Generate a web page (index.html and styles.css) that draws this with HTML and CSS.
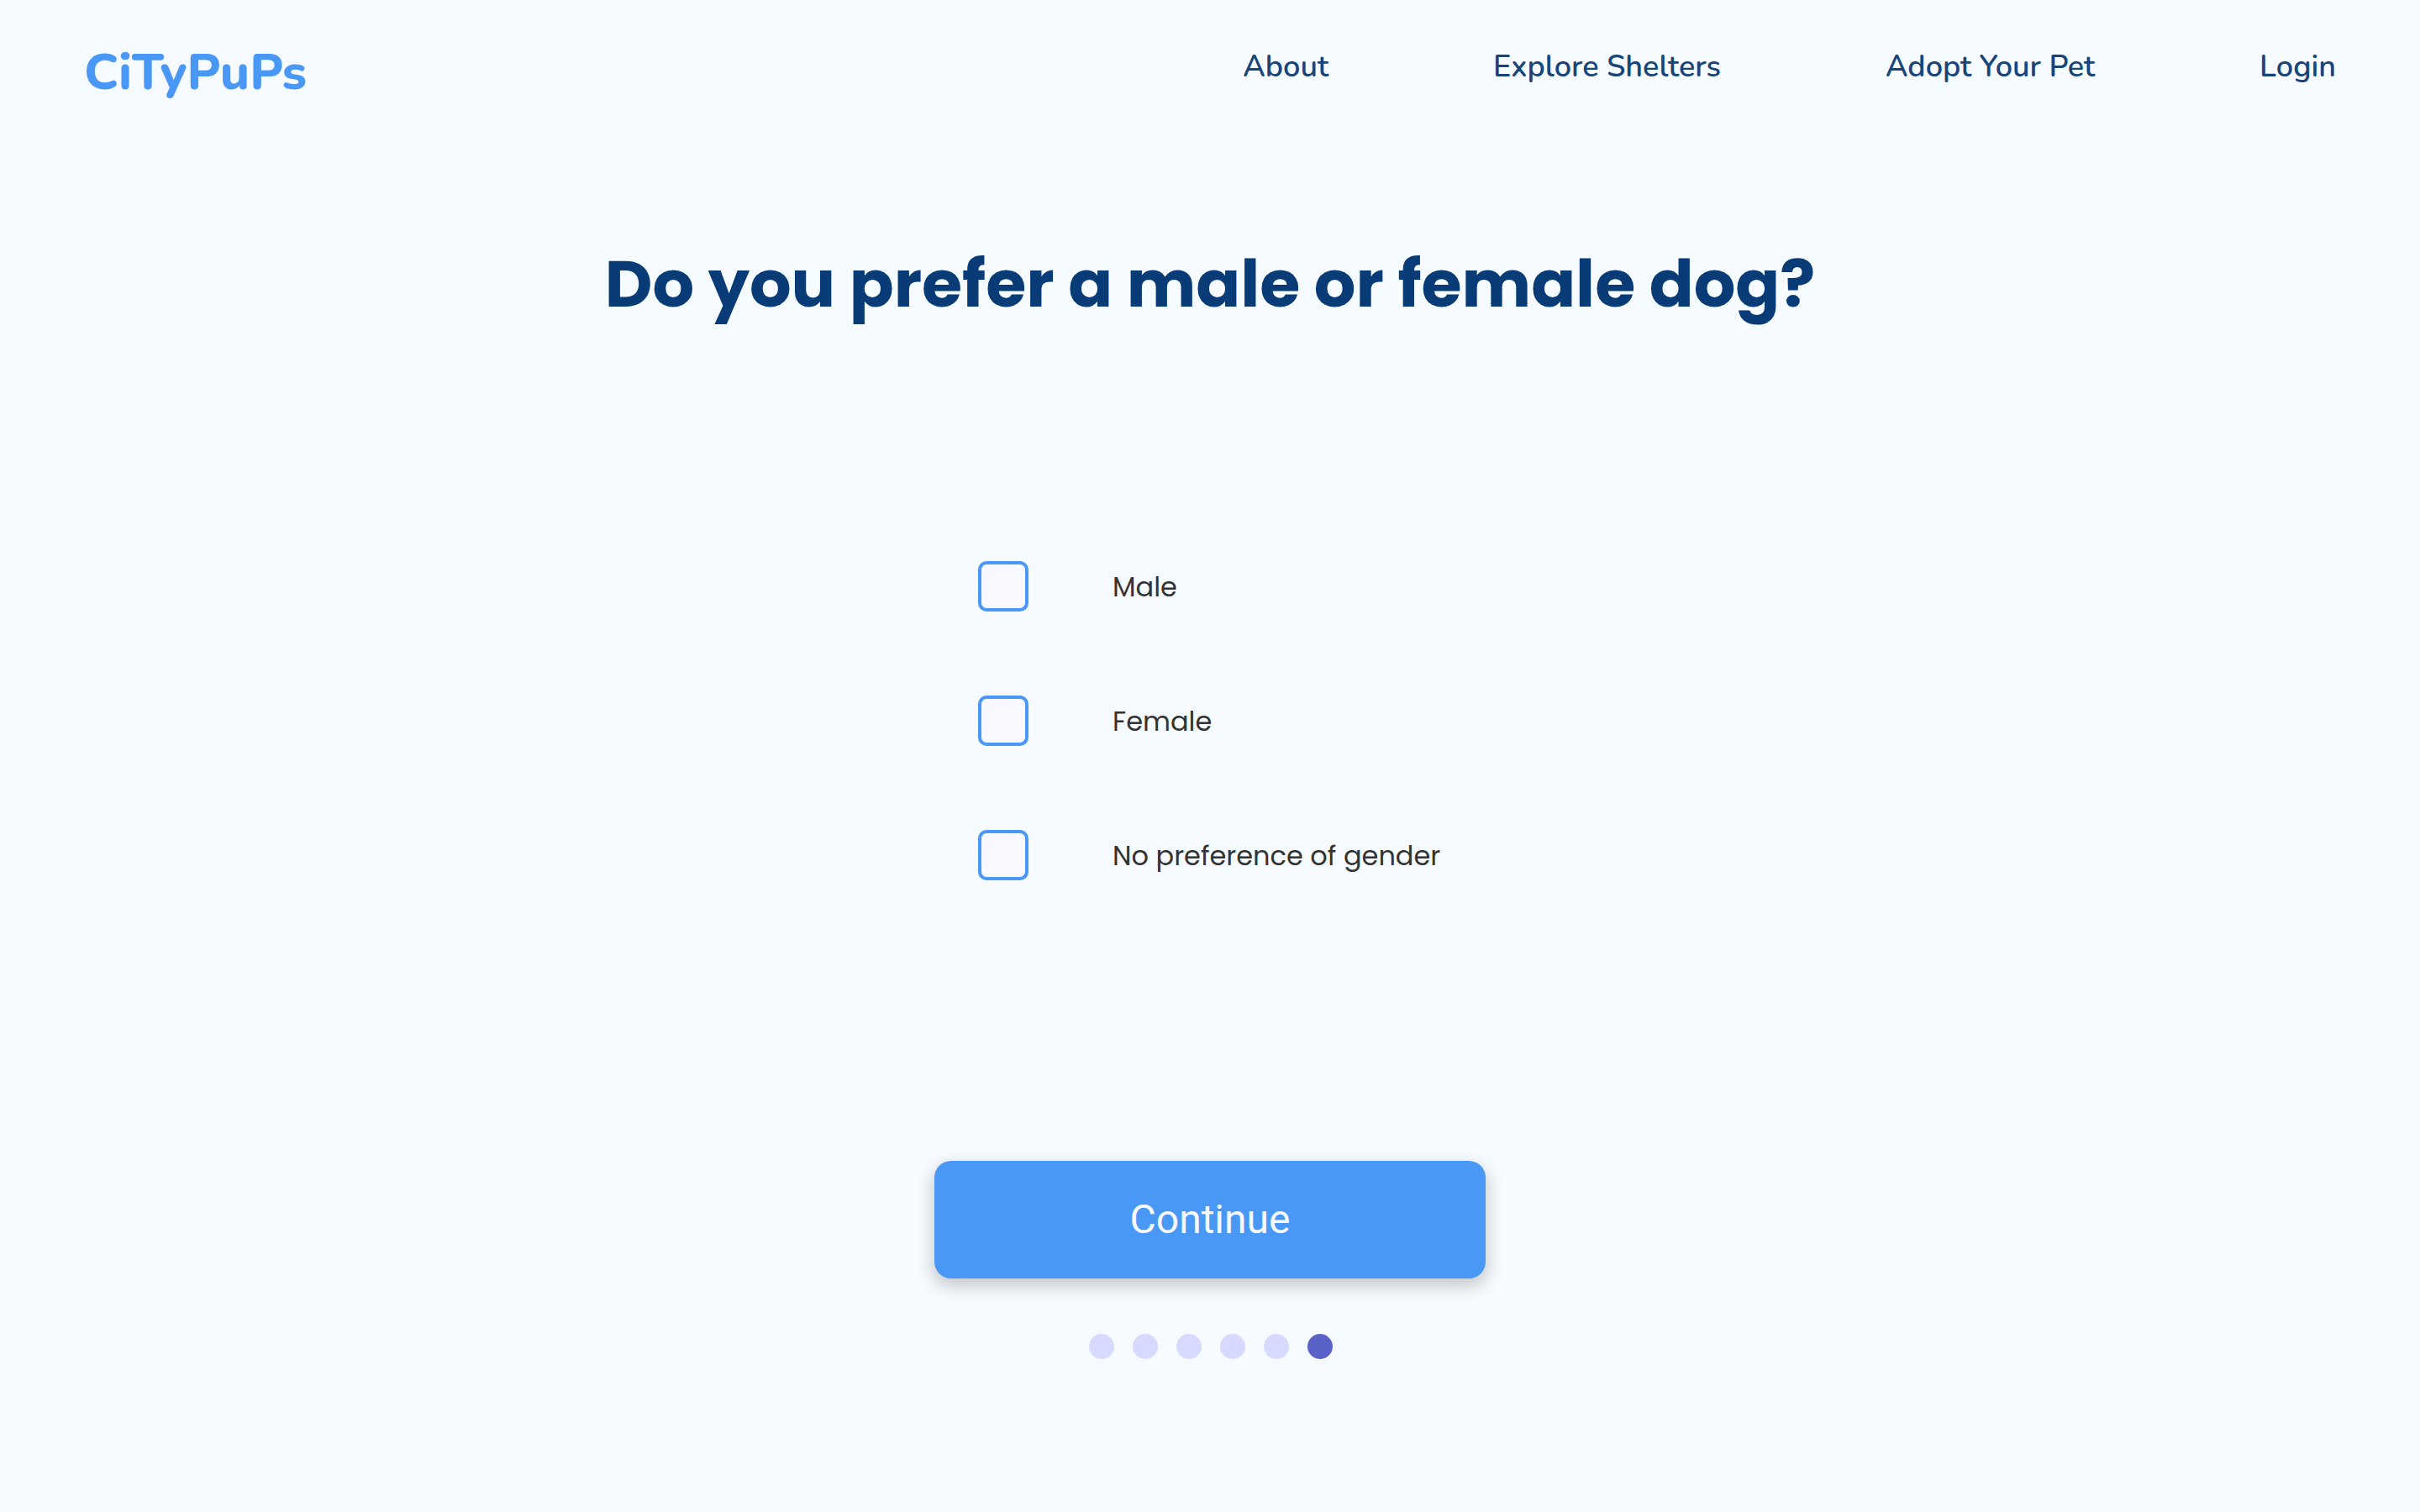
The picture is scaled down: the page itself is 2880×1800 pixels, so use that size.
FILE: index.html
```html
<!DOCTYPE html>
<html lang="en">
<head>
  <meta charset="utf-8">
  <meta name="viewport" content="width=device-width, initial-scale=1">
  <title>CiTyPuPs</title>
  <link rel="stylesheet" href="styles.css">
</head>
<body>
  <header class="site-header">
    <a class="logo" href="#">CiTyPuPs</a>
    <nav class="site-nav">
      <a class="nav-link" href="#">About</a>
      <a class="nav-link" href="#">Explore Shelters</a>
      <a class="nav-link" href="#">Adopt Your Pet</a>
      <a class="nav-link" href="#">Login</a>
    </nav>
  </header>
  <main class="quiz">
    <h1 class="question" id="question">Do you prefer a male or female dog?</h1>
    <form class="quiz-form">
      <div class="options" role="group" aria-labelledby="question">
        <label class="option"><input class="checkbox" type="checkbox" name="gender" value="male"><span class="option-text">Male</span></label>
        <label class="option"><input class="checkbox" type="checkbox" name="gender" value="female"><span class="option-text">Female</span></label>
        <label class="option"><input class="checkbox" type="checkbox" name="gender" value="any"><span class="option-text">No preference of gender</span></label>
      </div>
      <button class="continue" type="submit">Continue</button>
    </form>
    <ol class="steps">
      <li class="step"></li>
      <li class="step"></li>
      <li class="step"></li>
      <li class="step"></li>
      <li class="step"></li>
      <li class="step step-current"></li>
    </ol>
  </main>
</body>
</html>
```
FILE: styles.css
```css
* {
  box-sizing: border-box;
}

body {
  margin: 0;
  min-height: 100vh;
  background: #f6fbff;
  font-family: Poppins, Inter, sans-serif;
}

.site-header {
  display: flex;
  justify-content: space-between;
  align-items: flex-start;
  padding: 45px 100px 0;
  font-family: Nunito, "Open Sans", sans-serif;
}

.logo {
  color: #4a98f5;
  font-size: 60px;
  font-weight: 800;
  line-height: 82px;
  text-decoration: none;
}

.site-nav {
  display: flex;
  gap: 196px;
  padding-top: 10px;
}

.nav-link {
  color: #17457a;
  font-size: 36px;
  font-weight: 600;
  line-height: 50px;
  text-decoration: none;
}

.quiz {
  display: flex;
  flex-direction: column;
  align-items: center;
  padding: 151px 40px 80px;
}

.question {
  margin: 0;
  color: #093c76;
  font-size: 78px;
  font-weight: 700;
  line-height: 120px;
  text-align: center;
}

.quiz-form {
  display: flex;
  flex-direction: column;
  align-items: center;
  gap: 334px;
  padding-top: 270px;
}

.options {
  display: grid;
  gap: 100px;
  width: 552px;
}

.option {
  display: flex;
  align-items: center;
  gap: 100px;
  color: #333;
  font-size: 32px;
  line-height: 48px;
  white-space: nowrap;
}

.option-text {
  padding-top: 2px;
}

.checkbox {
  appearance: none;
  flex: none;
  width: 60px;
  height: 60px;
  margin: 0;
  border: 4px solid #4a98f5;
  border-radius: 10px;
  background: #f7f9ff;
}

.checkbox:checked {
  background: #4a98f5;
}

.continue {
  width: 656px;
  height: 140px;
  padding: 0 0 2px;
  border: 0;
  border-radius: 20px;
  background: #4a98f5;
  box-shadow: 0 8px 20px 2px rgba(0, 0, 0, 0.2);
  color: #f7f9ff;
  font-family: Roboto, sans-serif;
  font-size: 48px;
  font-weight: 400;
}

.steps {
  display: flex;
  gap: 22px;
  margin: 0;
  padding: 66px 0 0 2px;
  list-style: none;
}

.step {
  width: 30px;
  height: 30px;
  border-radius: 50%;
  background: #d7d9ff;
}

.step-current {
  background: #5a62c8;
}
```
